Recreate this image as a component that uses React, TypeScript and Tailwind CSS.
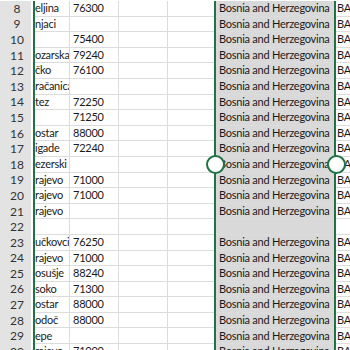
const rows = [
  { n: 8, b: 'eljina', c: '76300' },
  { n: 9, b: 'njaci', c: '' },
  { n: 10, b: '', c: '75400' },
  { n: 11, b: 'ozarska D', c: '79240' },
  { n: 12, b: 'čko', c: '76100' },
  { n: 13, b: 'račanica', c: '' },
  { n: 14, b: 'tez', c: '72250' },
  { n: 15, b: '', c: '71250' },
  { n: 16, b: 'ostar', c: '88000' },
  { n: 17, b: 'igade', c: '72240' },
  { n: 18, b: 'ezerski bb', c: '' },
  { n: 19, b: 'rajevo', c: '71000' },
  { n: 20, b: 'rajevo', c: '71000' },
  { n: 21, b: 'rajevo', c: '' },
  { n: 22, b: '', c: '', empty: true },
  { n: 23, b: 'učkovci', c: '76250' },
  { n: 24, b: 'rajevo', c: '71000' },
  { n: 25, b: 'osušje', c: '88240' },
  { n: 26, b: 'soko', c: '71300' },
  { n: 27, b: 'ostar', c: '88000' },
  { n: 28, b: 'odoč', c: '88000' },
  { n: 29, b: 'epe', c: '' },
  { n: 30, b: 'rajevo', c: '71000' },
];

const cell = 'h-[15.6px] border-b border-[#dcdcdc] flex items-center whitespace-nowrap overflow-hidden';

const App = () => {
  return (
    <div
      className="relative w-[350px] h-[350px] overflow-hidden bg-white text-[11px] tracking-[-0.25px] text-[#1a1a1a]"
      style={{ fontFamily: 'Lato, "Liberation Sans", sans-serif' }}
    >
      <div className="flex pt-[1px]">
        {/* row header */}
        <div className="w-[31px] shrink-0 bg-[#e3e3e3]">
          {rows.map((r) => (
            <div key={r.n} className="h-[15.6px] flex items-center justify-center pl-[3px] text-[12px] tracking-normal text-[#333]">
              {r.n}
            </div>
          ))}
        </div>
        <div className="w-[2px] shrink-0" />
        <div className="w-[2px] shrink-0 bg-[#217346]" />
        {/* B */}
        <div className="w-[35px] shrink-0 border-r border-[#dcdcdc]">
          {rows.map((r) => (
            <div key={r.n} className={cell}>
              {r.b}
            </div>
          ))}
        </div>
        {/* C */}
        <div className="w-[49px] shrink-0 border-r border-[#dcdcdc]">
          {rows.map((r) => (
            <div key={r.n} className={`${cell} pl-[3px]`}>
              {r.c}
            </div>
          ))}
        </div>
        {/* D */}
        <div className="w-[49px] shrink-0 border-r border-[#dcdcdc]">
          {rows.map((r) => (
            <div key={r.n} className={cell} />
          ))}
        </div>
        {/* E */}
        <div className="w-[46px] shrink-0">
          {rows.map((r) => (
            <div key={r.n} className={cell} />
          ))}
        </div>
        {/* F selected */}
        <div className="w-[122px] shrink-0 bg-[#d9d9d9] border-x-2 border-[#217346]">
          {rows.map((r) => (
            <div key={r.n} className={`${cell} border-[#c8c8c8] pl-[3px]`}>
              {r.empty ? '' : 'Bosnia and Herzegovina'}
            </div>
          ))}
        </div>
        {/* G */}
        <div className="flex-1">
          {rows.map((r) => (
            <div key={r.n} className={`${cell} pl-[1px]`}>
              {r.empty ? '' : 'BA'}
            </div>
          ))}
        </div>
      </div>
      {/* selection handles */}
      <div className="absolute left-[206px] top-[155px] w-[19px] h-[19px] rounded-full border-2 border-[#217346] bg-white" />
      <div className="absolute left-[327px] top-[155px] w-[19px] h-[19px] rounded-full border-2 border-[#217346] bg-white" />
    </div>
  );
};

export default App;
